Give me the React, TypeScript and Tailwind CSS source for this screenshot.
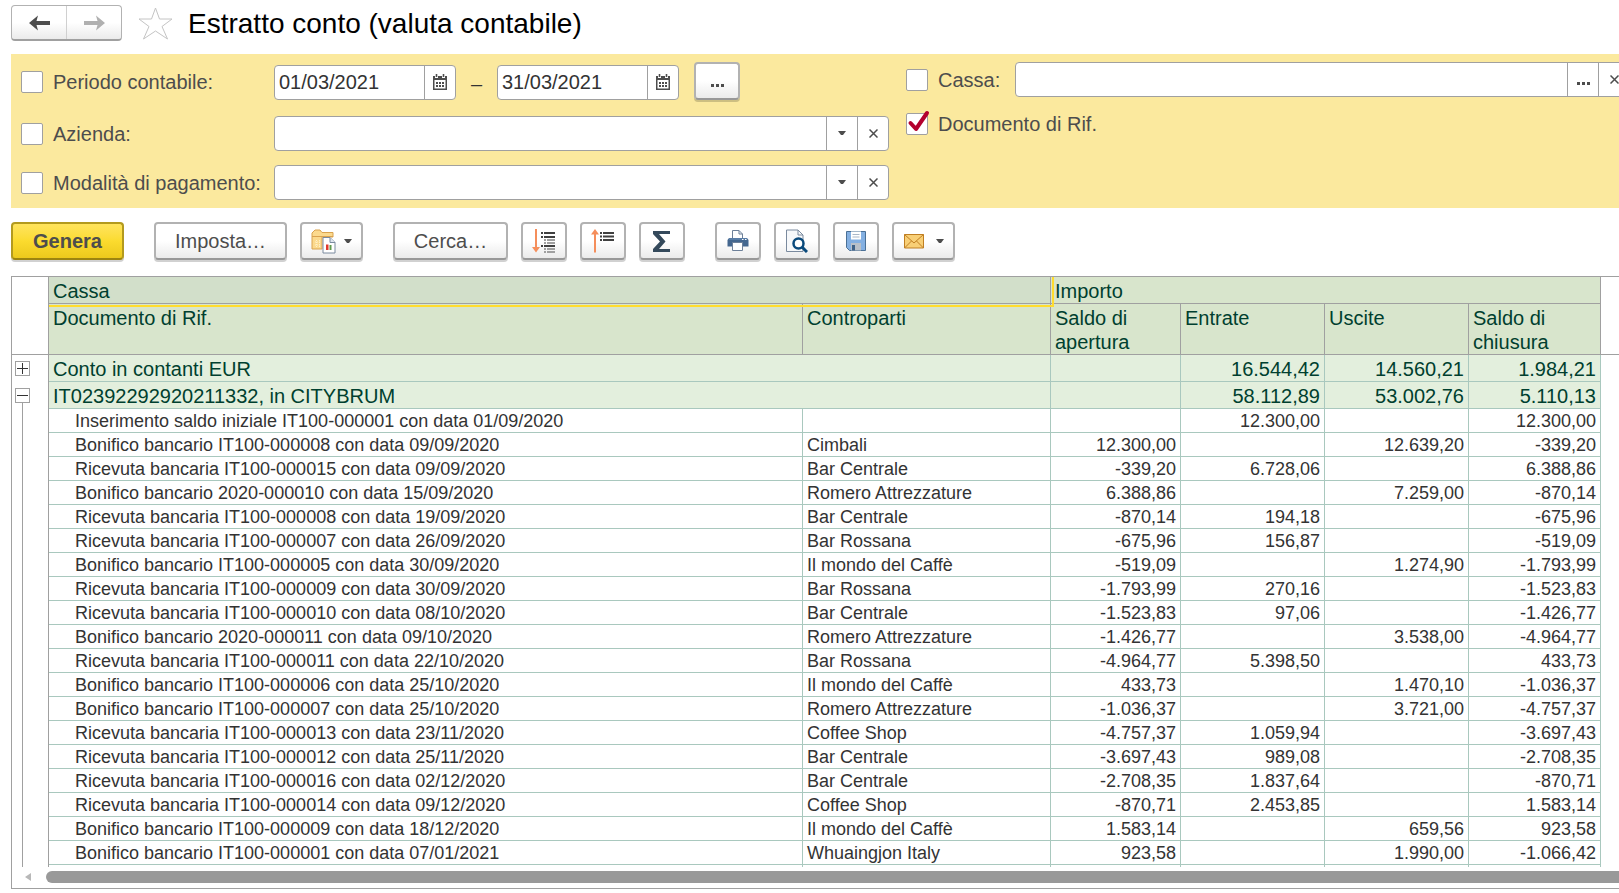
import { ReactNode, useState } from "react";

type Entry = [
  doc: string,
  party: string,
  opening: string,
  income: string,
  expense: string,
  closing: string,
];

const ENTRIES: Entry[] = [
  ["Inserimento saldo iniziale IT100-000001 con data 01/09/2020", "", "", "12.300,00", "", "12.300,00"],
  ["Bonifico bancario IT100-000008 con data 09/09/2020", "Cimbali", "12.300,00", "", "12.639,20", "-339,20"],
  ["Ricevuta bancaria IT100-000015 con data 09/09/2020", "Bar Centrale", "-339,20", "6.728,06", "", "6.388,86"],
  ["Bonifico bancario 2020-000010 con data 15/09/2020", "Romero Attrezzature", "6.388,86", "", "7.259,00", "-870,14"],
  ["Ricevuta bancaria IT100-000008 con data 19/09/2020", "Bar Centrale", "-870,14", "194,18", "", "-675,96"],
  ["Ricevuta bancaria IT100-000007 con data 26/09/2020", "Bar Rossana", "-675,96", "156,87", "", "-519,09"],
  ["Bonifico bancario IT100-000005 con data 30/09/2020", "Il mondo del Caffè", "-519,09", "", "1.274,90", "-1.793,99"],
  ["Ricevuta bancaria IT100-000009 con data 30/09/2020", "Bar Rossana", "-1.793,99", "270,16", "", "-1.523,83"],
  ["Ricevuta bancaria IT100-000010 con data 08/10/2020", "Bar Centrale", "-1.523,83", "97,06", "", "-1.426,77"],
  ["Bonifico bancario 2020-000011 con data 09/10/2020", "Romero Attrezzature", "-1.426,77", "", "3.538,00", "-4.964,77"],
  ["Ricevuta bancaria IT100-000011 con data 22/10/2020", "Bar Rossana", "-4.964,77", "5.398,50", "", "433,73"],
  ["Bonifico bancario IT100-000006 con data 25/10/2020", "Il mondo del Caffè", "433,73", "", "1.470,10", "-1.036,37"],
  ["Bonifico bancario IT100-000007 con data 25/10/2020", "Romero Attrezzature", "-1.036,37", "", "3.721,00", "-4.757,37"],
  ["Ricevuta bancaria IT100-000013 con data 23/11/2020", "Coffee Shop", "-4.757,37", "1.059,94", "", "-3.697,43"],
  ["Ricevuta bancaria IT100-000012 con data 25/11/2020", "Bar Centrale", "-3.697,43", "989,08", "", "-2.708,35"],
  ["Ricevuta bancaria IT100-000016 con data 02/12/2020", "Bar Centrale", "-2.708,35", "1.837,64", "", "-870,71"],
  ["Ricevuta bancaria IT100-000014 con data 09/12/2020", "Coffee Shop", "-870,71", "2.453,85", "", "1.583,14"],
  ["Bonifico bancario IT100-000009 con data 18/12/2020", "Il mondo del Caffè", "1.583,14", "", "659,56", "923,58"],
  ["Bonifico bancario IT100-000001 con data 07/01/2021", "Whuaingjon Italy", "923,58", "", "1.990,00", "-1.066,42"],
];

const HEAD = "border-r border-b border-[#a0a0a0] bg-[#d8e5cc] px-1 pt-[2px] text-left align-top font-normal";
const GROUP = "h-[27px] border-r border-b border-[#a9c8be] bg-[#e3efdd] px-1 pt-[2px]";
const CELL = "h-6 border-r border-b border-[#a9c8be] px-1 pt-[2px]";

function CheckField({
  id,
  label,
  initial = false,
}: {
  id: string;
  label: string;
  initial?: boolean;
}) {
  const [checked, setChecked] = useState(initial);

  return (
    <div className="flex items-center gap-[10px]">
      <span className="relative block size-[22px]">
        <input
          id={id}
          type="checkbox"
          checked={checked}
          onChange={(e) => setChecked(e.target.checked)}
          className="block size-[22px] appearance-none rounded-[2px] border border-[#a0a0a0] bg-white"
        />
        {checked ? (
          <svg
            viewBox="0 0 24 24"
            className="pointer-events-none absolute -top-[3px] left-0 size-6"
            fill="none"
            stroke="#b3002d"
            strokeWidth="4"
            strokeLinecap="round"
            strokeLinejoin="round"
          >
            <path d="M4.5 13 L10 19 L21 3" />
          </svg>
        ) : null}
      </span>
      <label htmlFor={id} className="whitespace-nowrap text-[#4d4d4d]">
        {label}
      </label>
    </div>
  );
}

function FieldButton({ label, children }: { label: string; children: ReactNode }) {
  return (
    <button
      type="button"
      aria-label={label}
      className="flex w-[31px] shrink-0 items-center justify-center border-l border-[#a0a0a0] text-[#4d4d4d]"
    >
      {children}
    </button>
  );
}

function Field({
  label,
  value = "",
  className = "",
  children,
}: {
  label: string;
  value?: string;
  className?: string;
  children: ReactNode;
}) {
  return (
    <div
      className={`flex h-[35px] overflow-hidden rounded-[4px] border border-[#a0a0a0] bg-white ${className}`}
    >
      <input
        aria-label={label}
        defaultValue={value}
        className="min-w-0 flex-1 px-1 text-[#333333] outline-none"
      />
      {children}
    </div>
  );
}

function ToolButton({
  label,
  className = "w-[46px]",
  children,
}: {
  label?: string;
  className?: string;
  children: ReactNode;
}) {
  return (
    <button
      type="button"
      aria-label={label}
      className={`flex h-[38px] shrink-0 items-center justify-center rounded-[4px] border-2 border-[#b2b2b2] border-b-[#989898] bg-linear-to-b from-white from-50% to-[#ebebeb] text-[#4d4d4d] shadow-[0_2px_0_rgba(0,0,0,0.18)] ${className}`}
    >
      {children}
    </button>
  );
}

function Caret() {
  return (
    <svg width="8" height="5" viewBox="0 0 8 5" fill="#4d4d4d">
      <path d="M0 0 H8 L5 4 H3 Z" />
    </svg>
  );
}

function Cross() {
  return (
    <svg width="9" height="9" viewBox="0 0 9 9" stroke="#4d4d4d" strokeWidth="1.5">
      <path d="M0.5 0.5 L8.5 8.5 M8.5 0.5 L0.5 8.5" />
    </svg>
  );
}

function Dots() {
  return (
    <svg width="13" height="3" viewBox="0 0 13 3" className="mt-2" fill="#4d4d4d">
      <path d="M0 0 H3 V3 H0 Z M5 0 H8 V3 H5 Z M10 0 H13 V3 H10 Z" />
    </svg>
  );
}

function CalendarIcon() {
  return (
    <svg width="14" height="17" viewBox="0 0 14 17" fill="#4d4d4d">
      <path
        fillRule="evenodd"
        d="M0 2 H2 V4 H5 V2 H9 V4 H12 V2 H14 V16 H0 Z M1.5 6 V14.5 H12.5 V6 Z"
      />
      <path d="M2.7 0 H4.3 V3 H2.7 Z M9.7 0 H11.3 V3 H9.7 Z" />
      <path d="M6 8 h2 v2 h-2 Z M9 8 h2 v2 h-2 Z M3 11 h2 v2 h-2 Z M6 11 h2 v2 h-2 Z M9 11 h2 v2 h-2 Z M3 8 h2 v2 h-2 Z" />
    </svg>
  );
}

function FolderIcon() {
  return (
    <svg width="25" height="25" viewBox="0 0 25 25">
      <path d="M1 20 V4 L4 1 H9 L11 3.5 H22 V8 H11 V20 Z" fill="#fbd98d" stroke="#d9a24e" />
      <path d="M1 7.5 H22" stroke="#d9a24e" />
      <path d="M4 13 h6 M4 16 h6 M5.5 11 v7 M8.5 11 v7" stroke="#fff0c8" strokeDasharray="1 1" />
      <path d="M12 8.5 H19 L24 13.5 V24 H12 Z" fill="#ffffff" stroke="#7a8a9e" />
      <path d="M19 8.5 V13.5 H24" fill="#dfe5ee" stroke="#7a8a9e" />
      <path d="M15 15.5 h2.5 V21 H15 Z" fill="#e0392b" />
      <path d="M18.5 16 h2 V21 h-2 Z" fill="#5f9a4c" />
    </svg>
  );
}

function ExpandIcon() {
  return (
    <svg width="24" height="24" viewBox="0 0 24 24">
      <path d="M4 0 V19" stroke="#f58e5b" strokeWidth="2" />
      <path d="M0 18 H8 L4 23.5 Z" fill="#f58e5b" />
      <g stroke="#404040" strokeWidth="2">
        <path d="M9 4 h2 M12 4 H23 M9 8 h2 M12 8 H23" />
        <path d="M9 17 h2 M12 17 H23" />
      </g>
      <g stroke="#a0a0a0" strokeWidth="2">
        <path d="M12 11 h2 M15 11 H23 M12 14 h2 M15 14 H23 M12 20 h2 M15 20 H23 M12 23 h2 M15 23 H23" />
      </g>
    </svg>
  );
}

function CollapseIcon() {
  return (
    <svg width="24" height="24" viewBox="0 0 24 24">
      <path d="M4 5 V23.5" stroke="#f58e5b" strokeWidth="2" />
      <path d="M0 5.5 H8 L4 0 Z" fill="#f58e5b" />
      <g stroke="#404040" strokeWidth="2">
        <path d="M9 4 h2 M12 4 H23 M9 7.5 h2 M12 7.5 H23 M9 11 h2 M12 11 H23" />
      </g>
    </svg>
  );
}

function SigmaIcon() {
  return (
    <svg width="18" height="21" viewBox="0 0 18 21">
      <path d="M0 0 H17 V3 H6 L12.5 10.5 L6 18 H17 V21 H0 V18 L7 10.5 L0 3 Z" fill="#34495b" />
    </svg>
  );
}

function PrinterIcon() {
  return (
    <svg width="22" height="22" viewBox="0 0 22 22">
      <path d="M5.5 9 V0.5 H12 L15.5 4 V9" fill="#ffffff" stroke="#6d8099" />
      <path d="M12 0.5 V4 H15.5" fill="none" stroke="#6d8099" />
      <path d="M2 8 H20 L21.5 10 V16.5 H0.5 V10 Z" fill="#44678f" />
      <path d="M2 9 H20" stroke="#6d93bd" />
      <path d="M15 9.5 h1.5 M18 9.5 h1.5" stroke="#ffffff" />
      <path d="M5.5 12.5 H15.5 V20.5 H5.5 Z" fill="#ffffff" stroke="#6d8099" />
    </svg>
  );
}

function PreviewIcon() {
  return (
    <svg width="22" height="24" viewBox="0 0 22 24">
      <path d="M0.5 1 H12 L17 6 V22.5 H0.5 Z" fill="#f6f8fa" stroke="#7a8a9e" />
      <path d="M12 1 V6 H17" fill="none" stroke="#7a8a9e" />
      <circle cx="12.5" cy="14.5" r="5" fill="#ffffff" stroke="#0a4a7c" strokeWidth="2.5" />
      <path d="M16 18 L21 23" stroke="#0a4a7c" strokeWidth="3" />
    </svg>
  );
}

function SaveIcon() {
  return (
    <svg width="20" height="20" viewBox="0 0 20 20">
      <path d="M0.5 0.5 H19.5 V19.5 H3.5 L0.5 16.5 Z" fill="#84b0e2" stroke="#4a7096" />
      <path d="M5 0.5 H15 V8.5 H5 Z" fill="#ffffff" />
      <path d="M6.5 3.5 H13.5 M6.5 6 H13.5" stroke="#a9b7c8" />
      <path d="M5 12 H15 V19.5 H5 Z" fill="#b9c0c8" />
      <path d="M6 14 H9 V19.5 H6 Z" fill="#3f6288" />
    </svg>
  );
}

function MailIcon() {
  return (
    <svg width="20" height="15" viewBox="0 0 20 15">
      <path d="M0.5 0.5 H19.5 V14 H0.5 Z" fill="#f8cf76" stroke="#c07f22" />
      <path d="M0.5 14 L7.5 7 M19.5 14 L12.5 7 M0.5 0.5 L10 9 L19.5 0.5" fill="none" stroke="#c07f22" />
    </svg>
  );
}

function TreeToggle({ open, onClick }: { open: boolean; onClick: () => void }) {
  return (
    <button
      type="button"
      aria-expanded={open}
      aria-label={open ? "Comprimi" : "Espandi"}
      onClick={onClick}
      className="flex size-[15px] items-center justify-center border border-[#a0a0a0] bg-white"
    >
      <svg width="11" height="11" viewBox="0 0 11 11" stroke="#333333">
        <path d={open ? "M0 5.5 H11" : "M0 5.5 H11 M5.5 0 V11"} />
      </svg>
    </button>
  );
}

export default function App() {
  const [cashOpen, setCashOpen] = useState(false);
  const [bankOpen, setBankOpen] = useState(true);

  return (
    <div className="overflow-hidden bg-white font-['Liberation_Sans',Arial,sans-serif] text-[20px] leading-6">
      <main className="w-[calc(100%+11px)] pl-[11px]">
        <header className="flex h-[54px] items-start pt-[5px]">
          <div className="flex h-9 w-[111px] rounded-[4px] border border-[#b2b2b2] border-b-2 border-b-[#a0a0a0] bg-linear-to-b from-white from-50% to-[#ebebeb]">
            <button
              type="button"
              aria-label="Indietro"
              className="flex flex-1 items-center justify-center border-r border-[#d0d0d0]"
            >
              <svg width="21" height="16" viewBox="0 0 21 16" fill="#4d4d4d">
                <path d="M0 8 L9 0.5 L7.5 6 H21 V10 H7.5 L9 15.5 Z" />
              </svg>
            </button>
            <button type="button" aria-label="Avanti" className="flex flex-1 items-center justify-center">
              <svg width="21" height="16" viewBox="0 0 21 16" fill="#b0b0b0">
                <path d="M21 8 L12 0.5 L13.5 6 H0 V10 H13.5 L12 15.5 Z" />
              </svg>
            </button>
          </div>
          <button type="button" aria-label="Preferiti" className="ml-4">
            <svg width="35" height="36" viewBox="0 0 35 36" fill="#ffffff" stroke="#c4c4c4">
              <path d="M17.5 3 L21.5 14 H34 L24 21.5 L29.5 34 L17.5 26 L5.5 34 L11 21.5 L1 14 H13.5 Z" />
            </svg>
          </button>
          <h1 className="ml-[15px] text-[28px] leading-[38px] text-black">Estratto conto (valuta contabile)</h1>
        </header>

        <section className="flex h-[154px] gap-[17px] bg-[#fbe99e] pl-[10px]">
          <div className="grid grid-cols-[243px_625px] content-start gap-y-[14px] pt-2">
            <div className="flex h-10 items-center">
              <CheckField id="period" label="Periodo contabile:" />
            </div>
            <div className="ml-[10px] flex items-center">
              <Field label="Data inizio" value="01/03/2021" className="w-[182px]">
                <FieldButton label="Scegli data inizio">
                  <CalendarIcon />
                </FieldButton>
              </Field>
              <span className="w-[41px] pt-1 text-center text-[#333333]">–</span>
              <Field label="Data fine" value="31/03/2021" className="w-[182px]">
                <FieldButton label="Scegli data fine">
                  <CalendarIcon />
                </FieldButton>
              </Field>
              <div className="ml-[15px] pb-[2px]">
                <ToolButton label="Scegli periodo">
                  <Dots />
                </ToolButton>
              </div>
            </div>
            <CheckField id="company" label="Azienda:" />
            <Field label="Azienda" className="ml-[10px]">
              <FieldButton label="Elenco aziende">
                <Caret />
              </FieldButton>
              <FieldButton label="Cancella azienda">
                <Cross />
              </FieldButton>
            </Field>
            <CheckField id="payment" label="Modalità di pagamento:" />
            <Field label="Modalità di pagamento" className="ml-[10px]">
              <FieldButton label="Elenco modalità">
                <Caret />
              </FieldButton>
              <FieldButton label="Cancella modalità">
                <Cross />
              </FieldButton>
            </Field>
          </div>

          <div className="flex min-w-0 flex-1 flex-col gap-[15px] pt-2">
            <div className="flex items-center gap-[15px]">
              <CheckField id="cash" label="Cassa:" />
              <Field label="Cassa" className="flex-1">
                <FieldButton label="Scegli cassa">
                  <Dots />
                </FieldButton>
                <FieldButton label="Cancella cassa">
                  <Cross />
                </FieldButton>
              </Field>
            </div>
            <CheckField id="refdoc" label="Documento di Rif." initial />
          </div>
        </section>

        <div className="flex h-[68px] items-start gap-[13px] pt-[14px]">
          <button
            type="button"
            className="mr-[17px] h-[38px] w-[113px] rounded-[4px] border-2 border-[#b39a1e] border-b-[#9c8410] bg-linear-to-b from-[#ffe45c] via-[#fbdb2e] to-[#ecc91c] font-bold text-[#4d4d4d] shadow-[0_2px_0_rgba(0,0,0,0.18)]"
          >
            Genera
          </button>
          <ToolButton className="w-[133px]">Imposta…</ToolButton>
          <div className="mr-[17px]">
            <ToolButton label="Varianti del report" className="w-[63px] gap-2">
              <FolderIcon />
              <Caret />
            </ToolButton>
          </div>
          <ToolButton className="w-[115px]">Cerca…</ToolButton>
          <ToolButton label="Espandi gruppi">
            <ExpandIcon />
          </ToolButton>
          <ToolButton label="Comprimi gruppi">
            <CollapseIcon />
          </ToolButton>
          <div className="mr-[17px]">
            <ToolButton label="Somma">
              <SigmaIcon />
            </ToolButton>
          </div>
          <ToolButton label="Stampa">
            <PrinterIcon />
          </ToolButton>
          <ToolButton label="Anteprima">
            <PreviewIcon />
          </ToolButton>
          <ToolButton label="Salva">
            <SaveIcon />
          </ToolButton>
          <ToolButton label="Invia" className="w-[63px] gap-3">
            <MailIcon />
            <Caret />
          </ToolButton>
        </div>

        <section className="border border-[#a0a0a0]">
          <table className="w-full table-fixed border-separate border-spacing-0 text-[#003f2f]">
            <colgroup>
              <col className="w-[37px]" />
              <col />
              <col className="w-[248px]" />
              <col className="w-[130px]" />
              <col className="w-[144px]" />
              <col className="w-[144px]" />
              <col className="w-[132px]" />
              <col className="w-[28px]" />
            </colgroup>
            <thead>
              <tr className="h-[27px]">
                <td rowSpan={2} className="border-r border-b border-[#a0a0a0]" />
                <th
                  colSpan={2}
                  className="relative z-10 border-r border-b border-[#a0a0a0] bg-[#d2dfca] px-1 pt-[2px] text-left font-normal"
                >
                  Cassa
                  {/* selected cell outline */}
                  <span className="pointer-events-none absolute top-0 -right-[4px] -bottom-[4px] left-0 border-r-2 border-b-2 border-[#ffdc2e]" />
                </th>
                <th colSpan={4} className={HEAD}>
                  Importo
                </th>
                <td rowSpan={2} className="border-b border-[#a0a0a0]" />
              </tr>
              <tr className="h-[51px]">
                <th className={HEAD}>Documento di Rif.</th>
                <th className={HEAD}>Controparti</th>
                <th className={HEAD}>Saldo di apertura</th>
                <th className={HEAD}>Entrate</th>
                <th className={HEAD}>Uscite</th>
                <th className={HEAD}>Saldo di chiusura</th>
              </tr>
            </thead>
            <tbody>
              <tr>
                <td className="border-r border-[#a0a0a0] pl-[3px]">
                  <TreeToggle open={cashOpen} onClick={() => setCashOpen(!cashOpen)} />
                </td>
                <td colSpan={2} className={GROUP}>
                  Conto in contanti EUR
                </td>
                <td className={GROUP} />
                <td className={`${GROUP} text-right`}>16.544,42</td>
                <td className={`${GROUP} text-right`}>14.560,21</td>
                <td className={`${GROUP} text-right`}>1.984,21</td>
              </tr>
              <tr>
                <td className="border-r border-[#a0a0a0] pl-[3px]">
                  <div className="flex h-[27px] flex-col pt-[6px]">
                    <TreeToggle open={bankOpen} onClick={() => setBankOpen(!bankOpen)} />
                    {bankOpen ? <span className="ml-[7px] flex-1 border-l border-[#a0a0a0]" /> : null}
                  </div>
                </td>
                <td colSpan={2} className={GROUP}>
                  IT02392292920211332, in CITYBRUM
                </td>
                <td className={GROUP} />
                <td className={`${GROUP} text-right`}>58.112,89</td>
                <td className={`${GROUP} text-right`}>53.002,76</td>
                <td className={`${GROUP} text-right`}>5.110,13</td>
              </tr>
              {bankOpen
                ? ENTRIES.map(([doc, party, ...amounts]) => (
                    <tr key={doc} className="text-[18px] leading-[21px] text-[#333333]">
                      <td className="border-r border-[#a0a0a0] pl-[10px]">
                        <div className="h-6 border-l border-[#a0a0a0]" />
                      </td>
                      <td className={`${CELL} pl-[26px]`}>{doc}</td>
                      <td className={CELL}>{party}</td>
                      {amounts.map((amount, idx) => (
                        <td key={idx} className={`${CELL} text-right`}>
                          {amount}
                        </td>
                      ))}
                    </tr>
                  ))
                : null}
              {/* top sliver of the next row */}
              <tr>
                <td className="border-r border-[#a0a0a0] pl-[10px]">
                  <div className="h-[2px] border-l border-[#a0a0a0]" />
                </td>
                <td className="border-r border-[#a9c8be]" />
                <td className="border-r border-[#a9c8be]" />
                <td className="border-r border-[#a9c8be]" />
                <td className="border-r border-[#a9c8be]" />
                <td className="border-r border-[#a9c8be]" />
                <td className="border-r border-[#a9c8be]" />
              </tr>
            </tbody>
          </table>

          <div className="flex h-[21px] items-center gap-[15px] pb-[2px] pl-[13px]">
            <button type="button" aria-label="Scorri a sinistra">
              <svg width="6" height="8" viewBox="0 0 6 8" fill="#b8b8b8" className="block">
                <path d="M6 0 V8 L0 4 Z" />
              </svg>
            </button>
            <div className="h-3 flex-1 rounded-l-full bg-[#999999]" />
          </div>
        </section>
      </main>
    </div>
  );
}
